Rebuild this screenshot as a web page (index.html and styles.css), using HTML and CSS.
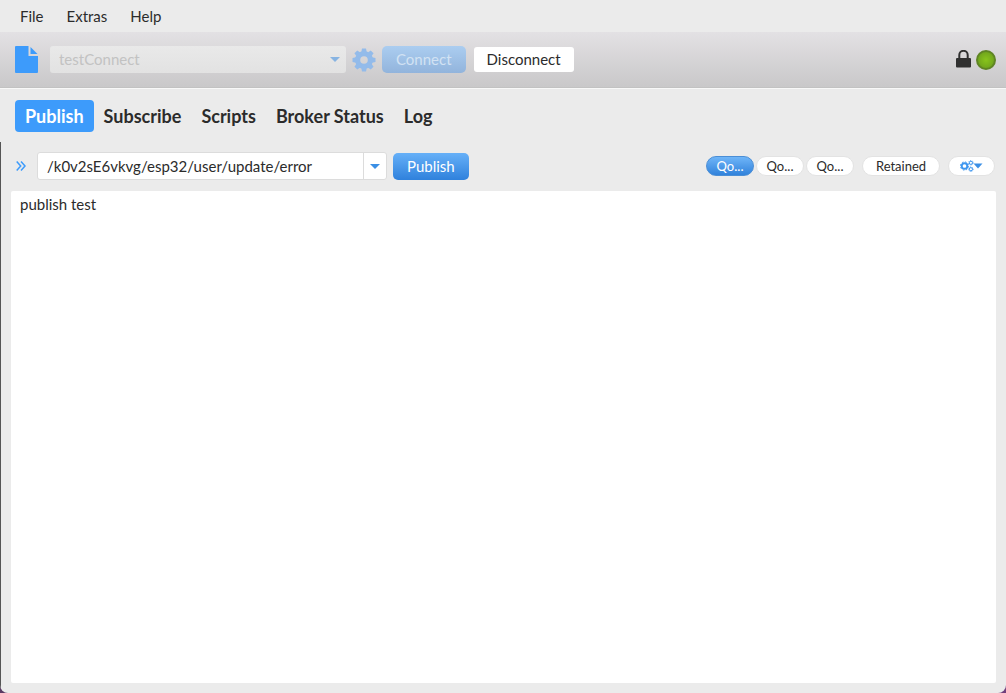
FILE: index.html
```html
<!DOCTYPE html>
<html lang="en">
<head>
<meta charset="utf-8">
<title>MQTT Client</title>
<link rel="stylesheet" href="styles.css">
</head>
<body>
<div class="window">
  <nav class="menubar" aria-label="Menu">
    <button class="menu-item" type="button">File</button>
    <button class="menu-item" type="button">Extras</button>
    <button class="menu-item" type="button">Help</button>
  </nav>

  <header class="toolbar">
    <button class="icon-button file-button" type="button" aria-label="Profiles">
      <svg width="23" height="27" viewBox="0 0 23 27"><path fill="#3d9bfb" d="M1 0H13.500V10H23V26Q23 27 22 27H1Q0 27 0 26V1Q0 0 1 0Z"/><path fill="#3d9bfb" d="M15.500 1L22.500 8H15.500Z"/></svg>
    </button>
    <div class="profile">
      <select class="profile-select" aria-label="Connection profile" disabled><option>testConnect</option></select>
      <svg class="profile-arrow" width="10" height="5" viewBox="0 0 10 5"><path fill="#88b4e2" d="M0 0H10L5 5Z"/></svg>
    </div>
    <button class="icon-button gear-button" type="button" aria-label="Settings" disabled>
      <svg width="24" height="24" viewBox="0 0 24 24">
        <mask id="hole"><rect width="24" height="24" fill="#fff"/><circle cx="12" cy="12" r="3.800" fill="#000"/></mask>
        <g fill="#93bbea" mask="url(#hole)">
          <circle cx="12" cy="12" r="9"/>
          <path d="M9.300 4L10 .5H14L14.700 4V20L14 23.500H10L9.300 20Z"/>
          <path d="M9.300 4L10 .5H14L14.700 4V20L14 23.500H10L9.300 20Z" transform="rotate(45 12 12)"/>
          <path d="M9.300 4L10 .5H14L14.700 4V20L14 23.500H10L9.300 20Z" transform="rotate(90 12 12)"/>
          <path d="M9.300 4L10 .5H14L14.700 4V20L14 23.500H10L9.300 20Z" transform="rotate(135 12 12)"/>
        </g>
      </svg>
    </button>
    <button class="button primary connect" type="button" disabled>Connect</button>
    <button class="button plain" type="button">Disconnect</button>
    <div class="status">
      <svg width="15" height="20" viewBox="0 0 15 20" role="img" aria-label="Secured"><path d="M3.300 9V5a4.200 4.200 0 0 1 8.400 0V9" fill="none" stroke="#303030" stroke-width="2"/><rect y="8" width="15" height="9.500" rx="1" fill="#303030"/></svg>
      <span class="led" role="img" aria-label="Connected"></span>
    </div>
  </header>

  <main class="content">
    <nav class="tabs" aria-label="Views">
      <button class="tab active" type="button">Publish</button>
      <button class="tab" type="button">Subscribe</button>
      <button class="tab" type="button">Scripts</button>
      <button class="tab" type="button">Broker Status</button>
      <button class="tab" type="button">Log</button>
    </nav>

    <section class="publish-bar">
      <button class="icon-button expand" type="button" aria-label="Expand history">
        <svg width="10" height="10" viewBox="0 0 10 10"><path d="M.7 .5L4.700 5L.7 9.500M5 .5L9 5L5 9.500" fill="none" stroke="#3d9bfb" stroke-width="1.500"/></svg>
      </button>
      <div class="topic">
        <input class="topic-input" type="text" aria-label="Topic" value="/k0v2sE6vkvg/esp32/user/update/error">
        <button class="topic-arrow" type="button" aria-label="Show topics"><svg width="10" height="5" viewBox="0 0 10 5"><path fill="#3b8fe5" d="M0 0H10L5 5Z"/></svg></button>
      </div>
      <button class="button primary" type="button">Publish</button>
      <div class="options">
        <div class="qos">
          <button class="pill active" type="button" aria-label="QoS 0">Qo...</button>
          <button class="pill" type="button" aria-label="QoS 1">Qo...</button>
          <button class="pill" type="button" aria-label="QoS 2">Qo...</button>
        </div>
        <button class="pill retained" type="button">Retained</button>
        <button class="pill more" type="button" aria-label="Publish options">
          <svg width="23" height="12" viewBox="0 0 23 12"><g fill="none" stroke="#3d96ef"><circle cx="4.500" cy="6" r="2.800" stroke-width="1.900"/><circle cx="4.500" cy="6" r="4.100" stroke-width="1" stroke-dasharray="1.610 1.610"/><circle cx="10.900" cy="2.800" r="1.600"/><circle cx="10.900" cy="2.800" r="2.300" stroke-width=".8" stroke-dasharray=".9 .9"/><circle cx="10.900" cy="9.200" r="1.600"/><circle cx="10.900" cy="9.200" r="2.300" stroke-width=".8" stroke-dasharray=".9 .9"/></g><path fill="#3b8fe5" d="M13.500 3.500H22.500L18 8.500Z"/></svg>
        </button>
      </div>
    </section>

    <textarea class="message" aria-label="Message" spellcheck="false">publish test</textarea>
  </main>
</div>
</body>
</html>
```
FILE: styles.css
```css
* { box-sizing: border-box; }

body {
  margin: 0;
  background: linear-gradient(90deg, #5b3a64, #70407c);
  font-family: Lato, "Open Sans", sans-serif;
  font-size: 15px;
  line-height: 20px;
  color: #2b2b2b;
}

button, input, select, textarea {
  margin: 0;
  padding: 0;
  border: 0;
  font: inherit;
  color: inherit;
}

svg { display: block; flex: none; }

.window {
  display: flex;
  flex-direction: column;
  min-height: 100vh;
  overflow: hidden;
  background: #ebebeb;
  border-radius: 0 0 8px 8px;
}

.menubar {
  display: flex;
  gap: 23px;
  height: 32px;
  padding: 0 20px;
}

.menu-item { background: none; }

.toolbar {
  display: flex;
  align-items: center;
  height: 56px;
  padding: 0 10px 0 15px;
  background: linear-gradient(#e3e1e4, #c9c8c9);
  border-bottom: 1px solid #c2c2c2;
}

.icon-button {
  display: flex;
  align-items: center;
  background: none;
}

.file-button { margin-right: 12px; }

.profile {
  position: relative;
  flex: 0 1 296px;
  margin-right: 6px;
}

.profile-select {
  display: block;
  width: 100%;
  height: 27px;
  padding: 0 24px 2px 9px;
  appearance: none;
  background: linear-gradient(#e9e9e9, #e2e2e2);
  border-radius: 3px;
  color: #c2c2c2;
  opacity: 1;
}

.profile-arrow {
  position: absolute;
  top: 11px;
  right: 6px;
}

.gear-button { margin-right: 6px; }

.button {
  height: 27px;
  padding: 0 14px 1px;
  border-radius: 5px;
  white-space: nowrap;
}

.primary {
  background: linear-gradient(#66b0f8, #2f81dc);
  color: #fff;
}

.connect {
  margin-right: 8px;
  background: linear-gradient(#abcdf0, #92b4dc);
  color: #d2e2f3;
}

.plain {
  height: 25px;
  padding: 0 13px 2px;
  background: #fff;
  border-radius: 3px;
}

.status {
  display: flex;
  align-items: center;
  gap: 5px;
  margin-left: auto;
}

.led {
  width: 20px;
  height: 20px;
  border: 2px solid #5f8424;
  border-radius: 50%;
  background: radial-gradient(circle, #88c41c, #689a1c);
}

.content {
  display: flex;
  flex: 1;
  flex-direction: column;
  padding: 11px 10px 10px 11px;
  border-top: 1px solid #f8f8f8;
  background: linear-gradient(#555, #555) 0 53px / 1px 100% no-repeat;
}

.tabs {
  display: flex;
  padding-left: 4px;
}

.tab {
  height: 32px;
  padding: 0 10px;
  border-radius: 4px;
  background: none;
  font-size: 18px;
  font-weight: 700;
}

.tab.active {
  background: #3d9bfb;
  color: #fff;
}

.publish-bar {
  display: flex;
  align-items: center;
  margin: 20px 0 11px;
  padding: 0 1px 0 5px;
}

.expand { margin-right: 11px; }

.topic {
  display: flex;
  flex: 0 1 350px;
  height: 28px;
  margin-right: 6px;
  background: #fff;
  border: 1px solid #dcdcdc;
  border-radius: 3px;
}

.topic-input {
  flex: 1;
  min-width: 0;
  padding: 0 9px;
  background: none;
}

.topic-arrow {
  display: flex;
  align-items: center;
  justify-content: center;
  width: 23px;
  background: none;
  border-left: 1px solid #dcdcdc;
}

.options {
  display: flex;
  gap: 8px;
  margin-left: auto;
}

.qos {
  display: flex;
  gap: 2px;
}

.pill {
  width: 48px;
  height: 20px;
  background: #fff;
  border: 1px solid #e3e3e3;
  border-radius: 10px;
  font-size: 13px;
  line-height: 16px;
}

.pill.active {
  background: linear-gradient(#6fb5f8, #3182db);
  border-color: #4a8ed6;
  color: #fff;
}

.retained { width: 78px; }

.more {
  display: flex;
  align-items: center;
  justify-content: center;
  width: 47px;
}

.message {
  flex: 1;
  padding: 3px 9px;
  background: #fff;
  border-radius: 2px;
  resize: none;
}
```
